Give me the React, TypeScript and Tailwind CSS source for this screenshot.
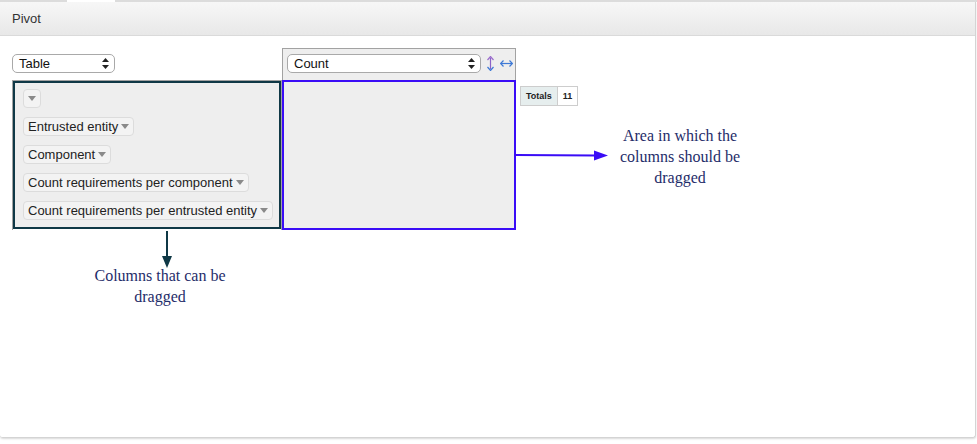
import React from 'react';

const Caret = () => (
  <svg width="8" height="5" viewBox="0 0 8 5" className="shrink-0">
    <path d="M0 0 L8 0 L4 5 Z" fill="#8a8a8a" />
  </svg>
);

const UpDown = () => (
  <svg width="7" height="11" viewBox="0 0 7 11" className="shrink-0">
    <path d="M3.5 0 L7 4 L0 4 Z" fill="#222" />
    <path d="M3.5 11 L7 7 L0 7 Z" fill="#222" />
  </svg>
);

// row / column order toggles
const VArrow = () => (
  <svg width="7" height="15" viewBox="0 0 7 15" className="shrink-0">
    <line x1="3.5" y1="2" x2="3.5" y2="13" stroke="#8a62c8" strokeWidth="1.2" />
    <path d="M0.5 4 L3.5 0.5 L6.5 4" fill="none" stroke="#9b6ccc" strokeWidth="1.2" />
    <path d="M0.5 11 L3.5 14.5 L6.5 11" fill="none" stroke="#3d79d6" strokeWidth="1.2" />
  </svg>
);

const HArrow = () => (
  <svg width="13" height="7" viewBox="0 0 13 7" className="shrink-0">
    <line x1="1" y1="3.5" x2="12" y2="3.5" stroke="#3d79d6" strokeWidth="1.2" />
    <path d="M3.5 0.5 L0.6 3.5 L3.5 6.5" fill="none" stroke="#3d79d6" strokeWidth="1.2" />
    <path d="M9.5 0.5 L12.4 3.5 L9.5 6.5" fill="none" stroke="#3d79d6" strokeWidth="1.2" />
  </svg>
);

const FakeSelect: React.FC<{ label: string; width: string }> = ({ label, width }) => (
  <div
    className={`${width} h-[19px] flex items-center justify-between pl-[6px] pr-[5px] bg-white border border-[#a9a9a9] rounded-[5px] text-[13px] text-[#111] leading-none`}
  >
    <span>{label}</span>
    <UpDown />
  </div>
);

const AttrPill: React.FC<{ label?: string }> = ({ label }) => (
  <div className="flex">
    <div className="h-[19px] inline-flex items-center gap-[3px] pl-[4px] pr-[4px] bg-[#f3f3f3] border border-[#dcdcdc] rounded-[4px] text-[13px] text-[#222] leading-none">
      {label && <span>{label}</span>}
      <Caret />
    </div>
  </div>
);

const attrs = [
  'Entrusted entity',
  'Component',
  'Count requirements per component',
  'Count requirements per entrusted entity'
];

export default function App() {
  return (
    <div className="w-[977px] h-[444px] bg-white relative" style={{ fontFamily: '"Liberation Sans", Arial, sans-serif' }}>
      {/* tab strip */}
      <div className="h-[2px] bg-[#dcdcdc] relative">
        <div className="absolute left-[67px] w-[48px] top-0 h-[2px] bg-white" />
      </div>

      {/* Panel */}
      <div className="h-[436px] mr-[1px] border-r border-b border-[#d4d4d4] rounded-b-[3px] shadow-[0_1px_2px_rgba(0,0,0,0.15)] flex flex-col">
        <div className="h-[34px] shrink-0 flex items-center px-[12px] bg-gradient-to-b from-[#f7f7f7] to-[#e8e8e8] border-b border-[#dadada] text-[13px] text-[#333]">
          Pivot
        </div>

        <div className="flex-1 pt-[12px] pl-[12px] relative">
          {/* Row 1: renderer + aggregator */}
          <div className="flex">
            <div className="w-[270px] h-[32px] flex items-center pb-[2px]">
              <FakeSelect label="Table" width="w-[103px]" />
            </div>
            <div className="w-[234px] h-[32px] flex items-center pl-[4px] pb-[2px] bg-[#eeeeee] border border-[#a2a2a2] border-b-0">
              <FakeSelect label="Count" width="w-[194px]" />
              <span className="ml-[6px]"><VArrow /></span>
              <span className="ml-[6px]"><HArrow /></span>
            </div>
          </div>

          {/* Row 2: unused attrs + rows drop zone + totals */}
          <div className="flex items-start">
            <div className="w-[270px] h-[150px] border border-[#a2a2a2] border-b-0">
              <div className="h-[148px] border-2 border-[#0f3846] bg-[#eeeeee] pt-[6px] pl-[8px] flex flex-col gap-[9px]">
                <AttrPill />
                {attrs.map((a) => (
                  <AttrPill key={a} label={a} />
                ))}
              </div>
            </div>
            <div className="w-[234px] h-[150px] border-2 border-[#3a0cf6] bg-[#eeeeee]" />
            <div className="ml-[4px] mt-[6px] flex text-[9px] font-bold text-[#222] leading-none">
              <div className="h-[20px] px-[5px] flex items-center bg-[#e6eeee] border border-[#cdcdcd]">Totals</div>
              <div className="h-[20px] px-[5px] flex items-center bg-white border border-l-0 border-[#cdcdcd]">11</div>
            </div>
          </div>

          {/* Annotation: rows area */}
          <svg className="absolute left-[516px] top-[113px]" width="94" height="12" viewBox="0 0 94 12">
            <line x1="0" y1="6" x2="80" y2="6.5" stroke="#3a0cf6" strokeWidth="2" />
            <path d="M78 1.5 L92 6.5 L78 11.5 Z" fill="#3a0cf6" />
          </svg>
          <div
            className="absolute left-[595px] top-[89px] w-[170px] text-center text-[16px] leading-[21px] text-[#1f2d6a]"
            style={{ fontFamily: '"Liberation Serif", "Times New Roman", serif' }}
          >
            Area in which the
            <br />
            columns should be
            <br />
            dragged
          </div>

          {/* Annotation: unused attrs */}
          <svg className="absolute left-[161px] top-[195px]" width="12" height="38" viewBox="0 0 12 38">
            <line x1="6" y1="0" x2="6" y2="28" stroke="#0f3846" strokeWidth="2" />
            <path d="M1 25 L11 25 L6 37 Z" fill="#0f3846" />
          </svg>
          <div
            className="absolute left-[70px] top-[229px] w-[180px] text-center text-[16px] leading-[21px] text-[#1f2d6a]"
            style={{ fontFamily: '"Liberation Serif", "Times New Roman", serif' }}
          >
            Columns that can be
            <br />
            dragged
          </div>
        </div>
      </div>
    </div>
  );
}
